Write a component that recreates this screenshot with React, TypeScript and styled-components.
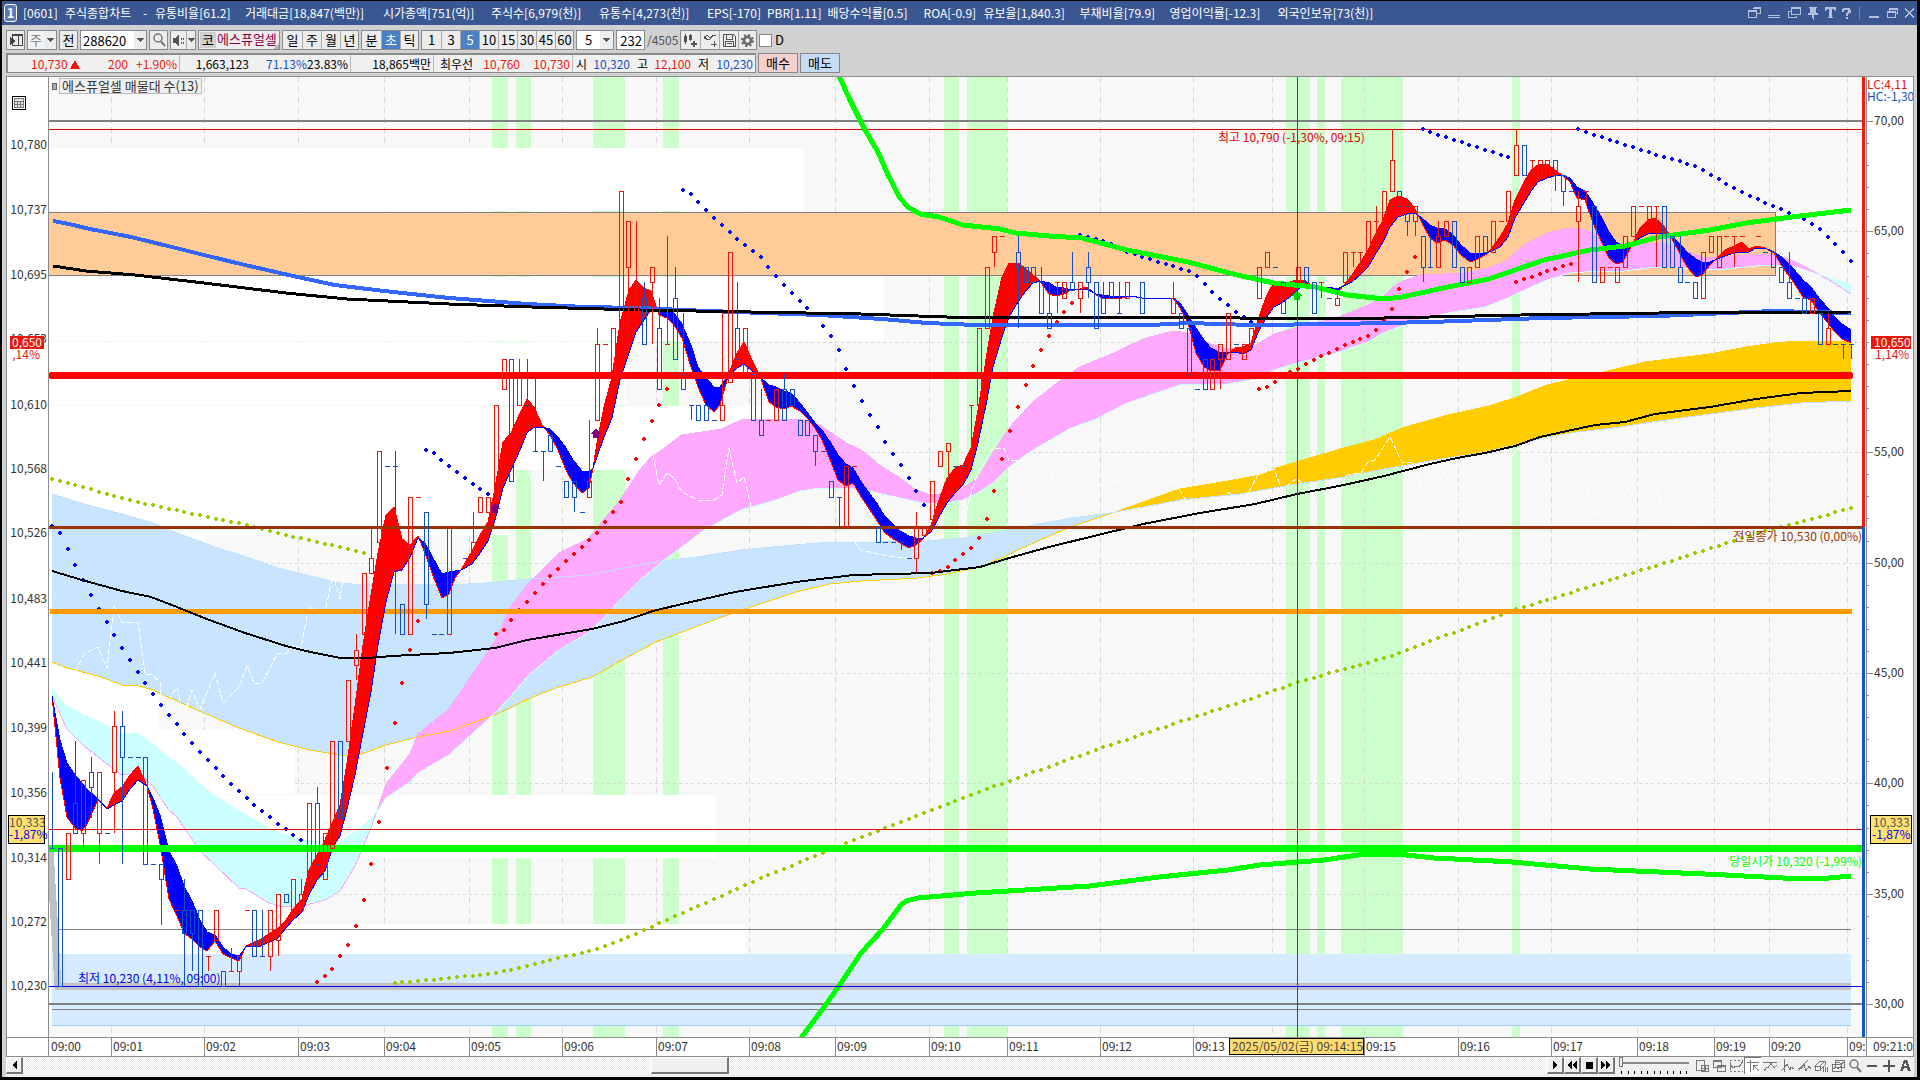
import React from "react";
import styled, { createGlobalStyle, css } from "styled-components";

/* ---------- global ---------- */

const Global = createGlobalStyle`
  * { box-sizing: border-box; }
  html, body { margin: 0; background: #000; }
  body, button, input, select {
    font-family: "Noto Sans CJK KR", "Liberation Sans", sans-serif;
    font-size: 13px;
    line-height: 16px;
  }
`;

/* ---------- chart data ---------- */

type Pt = [number, number];
const pts = (s: string): Pt[] =>
  s.trim().split(/\s+/).map((p) => p.split(",").map(Number) as Pt);

const STEP = 7.788;
const barX = (i: number) => Math.round(52 + i * STEP);
/* one level is a ten won tick below the day's marked high */
const levelY = (level: number) => Math.round(129.3 + level * 15.3);

/* bar index, body top, body bottom, high, low, direction */
const CANDLES = `
0 47 47 42 47 d;1 47 56 47 56 d;2 46 49 46 49 u;3 44 46 40 46 d;4 42.5 46 42.5 47 u;5 42 43 41 45 d;6 42 46 42 48 u;
7 46 46 46 46 d;8 39 42 38 46 u;9 39 41 38 48 d;10 41 41 41 41 d;11 41 41 41 41 d;12 41 48 41 48 d;13 48 48 48 48 d;
14 48 49 48 52 d;16 51 51 51 51 u;17 51 52.5 49 56 d;18 51 52.5 51 55 d;19 51 56 51 56 d;20 54 54 54 55 u;21 51 53 51 53 u;
22 55 56 55 56 d;23 55 55 53.5 55 u;24 54 55 54 56 u;25 51 51 51 51 u;26 51 54 51 54 d;27 54 54 51 54 d;28 51 54 51 55 u;
29 50 53 50 54 u;30 50 50.5 50 50.5 d;31 49 51 49 51 u;32 50 51 49 51 u;33 44 49 44 49 u;34 44 48 43 48 d;35 46 49 46 49 u;
36 40 47 40 47 u;37 40 45 40 45 d;38 36 40 36 40 u;39 34 35 33 36 u;40 29 33 29 33 u;41 28 29 26 29 u;42 21 27 21 27 u;
43 22 22 22 22 d;44 22 22 21 33 d;45 31 33 31 33 d;46 24 33 24 33 u;47 24 24 24 24 u;48 25 31 25 32 d;49 33 33 33 33 d;
50 33 33 33 33 d;51 26 33 26 33 u;53 28 28 28 28 d;54 27 27.5 25 28 u;55 24 25 24 25 u;56 24 25 24 25 u;57 18 24 18 24 u;
58 15 17 15 17 u;59 15 23 15 23 d;60 16 18 15 18 u;61 18 18 15 18 d;62 21 21 16 21 d;63 21 21 21 23 d;64 20 21 20 21 d;
65 22 22 22 22 d;66 23 24 23 24 d;67 23 24 23 25 d;68 25 25 25 25 d;69 23 24 19 24 u;70 14 19 13 19 u;71 14 14 14 14 u;
72 13 16 13 16 u;73 4 13 4 13 u;74 6 9 6 13 u;75 11 12 6 12 u;76 11 14 10 14 d;77 9 10 9 14 u;78 13 17 11 17 d;
79 14 14 7 14 u;80 11 15 9 15 d;81 16 17 12 17 d;82 18 18 18 19 d;83 18 19 18 19 d;84 18 19 18 19 d;85 19 19 19 19 d;
86 18 19 12 19 u;87 8 16.5 8 16.5 u;88 13 15 10 15 d;89 13 16 13 16 u;90 16 19 16 19 d;91 19 20 17 20 d;92 19 19 19 19 u;
93 17 19 17 19 u;94 17 19 16 19 d;95 17 18 17 18 d;96 19 20 19 20 d;97 19 20 19 20 d;98 20 21 20 22 d;99 21 21 21 21 d;
100 23 24 23 24 d;101 24 24 24 26 d;102 22 26 22 26 u;103 22 22 22 22 u;106 26 27 26 27 d;107 27 27 27 27 d;108 27 27 27 27 d;
109 27 27 27 27.5 d;110 28 28 28 28 d;111 26 28 25 29 u;112 26 26.5 26 26.5 u;113 23 25.5 23 25.5 u;114 21 22 21 22 u;
115 20.5 21 20.5 23 u;116 22 22 22 22 d;117 22 22 22 22 d;118 18 18 18 21 u;119 13 18 13 18 u;120 9 13 9 13 u;121 7 8 7 9 u;
122 7 7 7 7 u;124 8 9 7 13 d;125 9 10 9 10 d;126 9 10 9 10 d;127 10 12 9 12 d;128 12 13 10 13 d;129 10 10 10 12 u;
130 10 11 10 11 u;131 10 10.5 8 10.5 d;132 10 11 10 12 u;133 9 10 8 11 d;134 10 13 10 13 d;135 11 12 10 12 d;136 10 11 10 11 d;
137 12 12 10 12 d;138 10 11 10 11 u;140 10 12 10 12 d;144 11 12 10 12 u;145 12 13 12 13 d;146 13 16 13 16 d;147 17 17 17 17 d;
148 15 17 15 17 d;149 15 17 15 17 u;150 14 15 14 17 u;151 12 15 12 15 u;152 14 14 14 14 d;153 14 15 14 15 u;154 13 14 13 14 u;
155 9 11 9 11 u;156 8 9 8 9 u;157 9 9 9 9 d;158 10 12 10 12 d;160 9 10 9 10 u;161 9 10 9 10 d;162 10 12 10 12 d;163 10 10 10 11 u;
164 11 11 11 11 d;165 11 11.5 10.5 11.5 u;166 8 10 8 10 u;167 8 8 8 9 u;168 8 8 8 9 u;169 6 8 6 8 u;170 6 6 5 8 u;171 4 6 4 6 u;
172 2 4 0 4 u;173 4 5 4 5 d;174 5 6 5 7 d;175 5 6 5 7 u;176 7 9 7 10 d;177 9 9 7 9 d;178 7 9 6 9 u;179 6 7 6 7 u;180 6 9 6 9 d;
181 9 10 9 10 d;182 9 10 9 10 u;183 7 9 7 9 u;184 7 8 7 8 d;185 6 8 6 8 u;186 6 6 6 6 u;187 4 6 4 6 u;188 1 3 0 3 u;189 1 3 1 3 d;
190 2 2 2 3 u;191 2 3 2 3 u;192 2 3 2 3 u;193 2 3 2 4 d;194 3 4 3 5 d;195 4 4 4 4 d;196 5 6 4 10 u;197 4 4 4 5 u;198 5 10 5 10 d;
199 9 10 9 10 u;200 9 9 9 9 u;201 9 10 9 10 u;202 7 9 7 9 u;203 5 7 5 7 u;204 5 5 5 5 u;205 5 6 5 6 u;206 5 5 5 9 u;207 5 9 5 9 d;
208 7 9 7 9 d;209 9 10 7 10 d;210 10 10 10 10 d;211 10 11 10 11 d;212 8 11 8 11 u;213 7 8 7 8 u;214 7 9 7 9 u;215 7 7 7 7 u;
216 7 7 7 9 u;217 7 7 7 7 u;219 7 7 7 7 u;220 8 8 8 8 d;221 8 9 8 9 d;222 9 10 9 10 d;223 10 11 8 11 d;224 11 11 11 11 d;
225 11 12 11 12 d;226 11 12 11 12 u;227 12 14 12 14 d;228 13 14 12 14 u;229 14 14 14 14 d;230 14 14 14 15 d;231 14 14 14 15 d`
  .replace(/\n/g, "")
  .split(";")
  .map((row) => {
    const c = row.trim().split(" ");
    return { i: +c[0], top: +c[1], bottom: +c[2], high: +c[3], low: +c[4], up: c[5] === "u" };
  });

/* x, fast average, slow average */
const RIBBON = `
52,696,696 60,778,740 67,817,763 75,828,775 82,831,783 87,824,789 98,800,799 107,808,809 114,793,805 122,787,801 130,775,789
138,766,780 147,786,786 153,809,798 160,844,815 169,899,851 177,916,866 184,933,886 192,939,901 200,947,920 207,951,932
215,941,935 223,954,947 231,958,954 239,961,956 246,946,947 261,939,946 278,928,938 286,920,928 293,909,920 302,899,912
309,870,895 317,855,880 325,840,871 333,821,847 340,805,836 347,763,809 355,706,775 363,645,733 371,595,692 378,553,645
386,515,602 394,507,572 402,539,570 410,545,557 418,536,538 425,553,543 433,576,558 442,598,574 449,594,572 455,578,571
461,570,570 472,551,564 480,535,553 488,522,541 495,488,520 503,442,488 511,433,470 520,413,450 527,399,433 534,407,427
542,425,427 550,435,429 558,450,437 566,470,448 573,483,460 582,493,471 589,488,472 593,468,468 597,443,457 604,407,437
612,377,418 620,323,380 629,290,353 636,280,332 644,288,320 651,291,310 659,315,309 667,318,311 674,325,313 682,338,324
691,367,345 698,387,367 706,405,378 714,412,387 720,405,387 729,373,375 737,353,368 744,342,364 752,360,371 761,379,378
769,402,385 776,407,387 784,409,391 791,406,393 800,411,403 807,418,412 815,428,423 822,440,430 831,462,443 838,480,455
846,486,464 853,483,468 862,498,483 878,522,505 884,532,515 892,538,523 900,543,531 909,548,536 916,545,538 923,539,538
931,525,532 939,500,517 947,478,503 955,468,493 963,465,485 971,448,470 978,410,443 987,353,400 993,317,367 1002,277,337
1009,263,317 1018,263,302 1025,268,292 1033,275,283 1040,281,281 1049,294,283 1056,296,287 1064,294,288 1071,290,290
1080,289,289 1087,287,289 1096,295,294 1102,298,295 1118,299,297 1131,296,296 1142,298,298 1173,298,298 1180,308,303
1188,323,315 1196,353,328 1204,367,340 1211,371,348 1220,370,353 1227,355,352 1235,348,352 1243,347,354 1251,343,350
1258,320,333 1266,297,318 1274,282,307 1282,283,303 1290,282,297 1297,280,290 1305,280,285 1313,287,287 1321,287,287
1329,290,287 1336,294,289 1344,285,286 1352,275,282 1360,263,275 1368,250,267 1375,235,255 1383,220,242 1390,200,227
1398,196,217 1407,199,214 1414,207,213 1418,215,215 1422,223,218 1430,238,225 1437,243,228 1445,240,229 1453,245,235
1461,255,245 1470,262,253 1476,260,253 1487,254,253 1500,237,247 1508,223,237 1515,200,218 1524,182,203 1531,170,191
1538,165,182 1547,164,178 1554,169,176 1562,175,175 1570,182,178 1577,198,187 1585,200,191 1593,223,203 1602,243,218
1609,258,232 1616,264,242 1623,262,246 1633,243,243 1640,228,238 1648,220,234 1655,218,233 1663,225,234 1671,237,236
1679,252,243 1687,267,252 1696,277,259 1702,275,262 1710,265,262 1715,260,260 1725,250,256 1734,246,253 1742,242,252
1749,249,252 1756,246,248 1765,248,248 1774,253,252 1783,268,258 1792,280,267 1803,297,280 1811,300,287 1819,312,298
1827,322,307 1835,332,317 1842,339,324 1851,343,330`
  .trim()
  .split(/\s+/)
  .map((p) => p.split(",").map(Number));
const FAST = RIBBON.map((r) => [r[0], r[1]] as Pt);
const SLOW = RIBBON.map((r) => [r[0], r[2]] as Pt);

const PINK = pts(`52,696 67,729 84,746 106,763 122,775 139,773 153,786 168,809 177,817 200,851 215,865 239,888 246,889 269,903
280,906 301,907 310,904 325,900 340,891 355,866 371,828 378,808 386,784 410,754 418,734 449,709 472,675 495,641 511,606
529,583 559,553 588,539 600,524 612,510 620,500 640,470 651,457 662,450 682,435 722,429 743,419 767,420 800,419 820,425
846,443 861,450 882,467 900,478 916,490 931,495 947,493 963,488 978,478 993,453 1009,428 1033,402 1061,380 1080,367 1114,353
1143,339 1173,331 1188,333 1204,342 1227,349 1251,348 1274,334 1305,325 1336,318 1368,305 1383,297 1398,283 1420,275
1466,273 1492,267 1508,260 1524,245 1547,233 1570,228 1585,230 1609,238 1625,247 1648,243 1663,243 1679,248 1702,257
1725,257 1756,254 1774,254 1796,262 1815,272 1834,283 1851,294`);
const CYAN = pts(`52,689 67,706 84,715 106,725 122,733 139,734 153,744 168,757 177,763 200,784 215,796 239,811 246,815 269,828
280,833 301,840 325,842 340,842 355,832 371,819 378,810 386,798 410,782 418,773 449,755 472,734 495,713 511,696 529,675
559,650 588,633 604,618 620,600 640,580 662,562 706,529 741,510 776,500 800,491 820,488 846,488 869,491 900,498 923,503
947,503 963,500 978,493 993,483 1009,467 1033,450 1071,428 1094,420 1127,403 1180,385 1228,384 1255,379 1274,370 1297,363
1336,353 1368,342 1383,333 1407,324 1430,317 1453,312 1485,307 1508,298 1531,287 1547,280 1570,273 1585,272 1625,271
1655,267 1679,268 1702,269 1725,269 1756,266 1774,265 1796,267 1811,272 1824,276 1843,282 1851,285`);
const SKY = pts(`52,494 84,504 122,514 153,523 177,533 215,547 246,557 278,568 310,576 340,583 363,585 408,584 449,585 486,583
529,579 588,575 640,565 662,561 698,557 741,550 784,546 829,542 878,542 927,541 963,538 993,533 1033,525 1071,518 1110,513
1143,507 1180,500 1240,494 1251,492 1297,484 1344,477 1384,469 1430,461 1485,452 1515,445 1547,437 1577,432 1613,428
1659,421 1710,414 1756,408 1801,403 1851,401`);
const GOLD = pts(`52,662 67,668 98,676 122,685 139,686 153,690 177,701 204,713 239,728 278,742 310,750 340,755 359,755 386,745
418,737 449,731 469,724 495,715 535,696 559,687 592,677 624,659 656,642 682,632 722,617 763,603 796,592 829,584 861,581
918,578 947,574 980,567 988,564 1018,550 1049,536 1073,526 1118,511 1143,502 1180,489 1228,481 1260,475 1273,469 1306,459
1344,448 1374,440 1402,428 1448,415 1489,406 1517,397 1547,385 1577,378 1604,372 1645,362 1710,354 1746,347 1774,343
1797,341 1851,341`);

const LINES = [
  { color: "#000", width: 2, d: `52,571 82,580 122,591 151,597 177,607 204,618 245,633 286,646 306,651 340,658 367,658 392,656 449,653
495,648 527,640 592,629 624,621 653,611 682,604 735,592 796,582 853,575 931,573 980,567 1009,558 1049,547 1098,535 1143,524
1200,513 1255,504 1297,494 1344,485 1384,476 1430,464 1457,458 1485,453 1515,446 1540,437 1567,431 1595,425 1625,422
1655,414 1710,407 1756,399 1801,393 1851,391` },
  { color: "#3366ff", width: 4, d: `53,221 69,224 90,229 131,237 176,248 208,256 245,265 302,278 335,285 384,291 449,298 527,304 584,307
640,308 682,310 763,313 820,315 882,319 927,323 976,325 1151,325 1188,323 1251,325 1338,324 1430,322 1544,318 1659,316
1774,311 1851,313` },
  { color: "#000", width: 3, d: `53,266 86,271 135,275 204,283 286,293 347,299 449,304 531,307 640,310 861,314 947,317 1240,318 1384,318
1521,315 1659,313 1851,312` },
  { color: "#00ff00", width: 5, d: `839,76 850,100 865,130 878,152 888,175 900,198 908,207 920,214 939,217 963,225 1000,229 1016,233
1049,236 1082,238 1127,250 1188,262 1237,275 1274,283 1315,287 1347,295 1384,299 1402,297 1448,287 1489,279 1544,260
1590,250 1625,246 1659,237 1710,230 1746,223 1792,217 1851,210` },
  { color: "#00ff00", width: 5, d: `801,1038 827,1003 841,983 861,953 882,930 900,906 906,901 918,898 976,893 1090,886 1159,877 1228,870
1260,865 1324,860 1365,854 1397,854 1434,858 1512,862 1590,869 1705,874 1783,878 1829,878 1851,876` },
];

const WHITE_DASH = [
  `75,672 84,654 98,647 107,668 114,606 122,622 138,622 145,674 153,675 160,683 162,710 177,687 184,717 192,690 200,710 215,673
223,703 239,687 247,666 254,683 262,683 278,653 286,654 293,645 301,648 309,606 318,614 325,612 333,574 340,599 347,549`,
  `511,490 520,470 527,468 534,487 550,488 558,495 566,505 582,510`,
  `653,454 659,485 667,473 674,478 682,492 698,500 714,500 722,495 729,448 737,483 744,477 752,510 784,505 804,515 820,525
837,537 846,530 861,550 878,554 909,559 923,545 931,522 947,518 963,525 971,493 978,473 993,448 1004,448 1009,460 1024,460
1033,468 1041,470 1049,485 1056,470 1087,469 1096,487 1110,480 1142,483 1173,480 1188,503 1204,522 1216,517 1228,492
1243,503 1258,475 1274,469 1282,490 1297,478 1313,497 1321,487 1336,493 1347,475 1361,473 1368,462 1375,460 1390,437
1402,462 1414,463 1422,490 1430,490 1445,472 1457,500 1475,483 1485,488 1503,472 1517,448 1524,453 1547,453 1554,460
1570,472 1585,478 1593,515 1616,508 1633,482 1655,482 1663,513 1696,527 1710,500 1742,500 1749,517 1756,502 1774,520`,
];

const DOTS: { color: string; from: number; ys: number[] }[] = [
  { color: "#0000ff", from: 0, ys: [526, 533, 549, 565, 580, 595, 609, 622, 635, 648, 660, 672, 683, 694, 705, 715, 724, 734, 743, 752, 760, 768, 776, 784, 791, 798, 805, 811, 817, 824, 829, 835, 840] },
  { color: "#0000ff", from: 48, ys: [450, 453, 460, 466, 472, 478, 484, 489, 494] },
  { color: "#0000ff", from: 81, ys: [190, 194, 202, 210, 218, 225, 232, 239, 245, 251, 257, 267, 276, 285, 293, 301, 308, 315, 326, 336, 350, 369, 386, 401, 415, 427, 442, 454, 465, 478, 491, 505] },
  { color: "#0000ff", from: 132, ys: [235, 237, 239, 241, 244, 247, 252, 254, 257, 259, 262, 264, 266, 269, 271, 276, 284, 292, 299, 305, 312, 317, 322] },
  { color: "#0000ff", from: 176, ys: [129, 132, 135, 137, 140, 142, 145, 147, 150, 152, 155, 157] },
  { color: "#0000ff", from: 196, ys: [129, 132, 135, 137, 140, 142, 145, 147, 150, 152, 155, 157, 159, 161, 164, 166, 170, 175, 179, 184, 188, 192, 196, 199, 203, 206, 209, 213, 216, 219, 224, 229, 237, 244, 252, 261] },
  { color: "#ff0000", from: 34, ys: [982, 976, 969, 956, 945, 926, 900, 864, 822, 768, 723, 683, 650, 621] },
  { color: "#ff0000", from: 57, ys: [634, 630, 620, 610, 602, 593, 584, 576, 569, 561, 554, 547, 540, 533, 522, 512, 502, 479, 459, 439, 421, 405, 389] },
  { color: "#ff0000", from: 113, ys: [573, 571, 567, 560, 554, 548, 538, 519, 491, 459, 431, 407, 385, 366, 350, 336, 322, 312, 303] },
  { color: "#ff0000", from: 155, ys: [389, 387, 382, 375, 372, 369, 364, 360, 356, 353, 349, 345, 342, 339, 336, 330, 320, 309, 289, 272, 257] },
  { color: "#ff0000", from: 188, ys: [282, 279, 277, 274, 271, 269, 266, 264] },
];

/* bar index, y */
const OLIVE = [
  pts("0,479 11,502 20,517 25,525 29,533 33,540 38,549 40,553"),
  pts(`44,983 50,979 57,973 61,966 65,958 69,951 71,946 75,934 78,923 83,906 87,892 92,875 99,853 104,837 109,822 114,807 119,792
124,778 129,764 134,750 139,737 144,724 149,711 152,704 160,682 172,656 188,609 192,600 196,590 200,580 205,568 210,556
215,543 220,531 225,521 231,508`),
];

const SIGNAL_BARS = [[492, 508], [516, 531], [593, 625], [663, 679], [944, 959], [967, 1007], [1286, 1310], [1317, 1325], [1341, 1403], [1512, 1520]];
/* y, height, right edge of the volume-at-price rows */
const PROFILE = [[148, 63, 804], [277, 64, 884], [342, 63, 626], [406, 64, 790], [470, 65, 510], [535, 64, 205], [600, 64, 250], [665, 65, 159], [730, 64, 294], [795, 63, 716], [858, 66, 298], [924, 30, 745]];

const MINUTES: [number, string][] = [
  [49, "09:00"], [111, "09:01"], [204, "09:02"], [298, "09:03"], [384, "09:04"], [469, "09:05"], [562, "09:06"], [656, "09:07"],
  [749, "09:08"], [835, "09:09"], [929, "09:10"], [1007, "09:11"], [1100, "09:12"], [1193, "09:13"], [1272, ""], [1364, "09:15"],
  [1458, "09:16"], [1551, "09:17"], [1637, "09:18"], [1714, "09:19"], [1769, "09:20"], [1847, "09:21"],
];
const PRICES = [780, 737, 695, 653, 610, 568, 526, 483, 441, 399, 356, 314, 272, 230];
const OSC = [70, 65, 60, 55, 50, 45, 40, 35, 30];
const oscY = (v: number) => Math.round(121 + (70 - v) * 22.08);

const at = (line: Pt[], x: number) => {
  if (x <= line[0][0]) return line[0][1];
  for (let k = 1; k < line.length; k++) {
    const [x0, y0] = line[k - 1];
    const [x1, y1] = line[k];
    if (x <= x1) return y0 + ((y1 - y0) * (x - x0)) / (x1 - x0);
  }
  return line[line.length - 1][1];
};

const str = (line: Pt[]) => line.map((p) => p.join(",")).join(" ");

/* Fills between two lines, in one colour where a is the upper one and in the other where b is. */
function Band({ a, b, above, below }: { a: Pt[]; b: Pt[]; above: string; below: string }) {
  const runs: { up: boolean; xs: number[] }[] = [];
  for (let x = 52; x < 1851; x += 1) {
    const up = at(a, x + 0.5) < at(b, x + 0.5);
    const last = runs[runs.length - 1];
    if (last && last.up === up) last.xs.push(x + 1);
    else runs.push({ up, xs: [x, x + 1] });
  }
  return (
    <>
      {runs.map((r, k) => (
        <polygon
          key={k}
          fill={r.up ? above : below}
          points={str([
            ...r.xs.map((x) => [x, +at(a, x).toFixed(1)] as Pt),
            ...[...r.xs].reverse().map((x) => [x, +at(b, x).toFixed(1)] as Pt),
          ])}
        />
      ))}
    </>
  );
}

const Dot = ({ x, y, color }: { x: number; y: number; color: string }) => (
  <path d={`M${x - 2} ${y - 1}h1v-1h2v1h1v2h-1v1h-2v-1h-1z`} fill={color} />
);

/* ---------- shell ---------- */

const Window = styled.div`
  min-height: 100vh;
  display: flex;
  flex-direction: column;
  background: #d1d1d1;
  border: solid #000;
  border-width: 1px 3px 3px 2px;
`;

const TitleBar = styled.header`
  height: 24px;
  flex: none;
  display: flex;
  align-items: center;
  padding: 0 2px;
  background: #3b5791;
  color: #fff;
`;
const AppMark = styled.span`
  width: 13px;
  height: 18px;
  margin-right: 6px;
  border: 1px solid #fff;
  border-radius: 3px;
  background: #5b78b0;
  font-weight: bold;
  text-align: center;
`;
const Title = styled.h1`
  margin: 0;
  flex: 1;
  display: flex;
  gap: 6px;
  font-size: 12px;
  font-weight: normal;
  white-space: nowrap;
`;
const WindowTools = styled.div`
  display: flex;
  align-items: center;
  gap: 6px;
  color: #b4c0da;
`;
const BareButton = styled.button`
  display: flex;
  align-items: center;
  justify-content: center;
  padding: 0;
  border: 0;
  background: none;
  color: inherit;
`;
const Divider = styled.i`
  width: 1px;
  height: 14px;
  margin: 0 2px;
  background: #7f7f80;
`;

const Bar = styled.div`
  display: flex;
  flex: none;
  align-items: center;
  gap: 2px;
  padding-left: 4px;
  white-space: nowrap;
`;
const ToolBar = styled(Bar)`
  margin-top: 5px;
  height: 20px;
`;
const QuoteBar = styled(Bar)`
  margin: 3px 0;
  height: 20px;
`;
const Group = styled.div`
  display: flex;
  height: 20px;
  border: 1px solid #8a8a8a;
  background: #ececec;
`;
const Tool = styled.button<{ $on?: boolean; $w?: number }>`
  display: flex;
  align-items: center;
  justify-content: center;
  width: ${(p) => p.$w ?? 19}px;
  padding: 0;
  border: 0;
  background: ${(p) => (p.$on ? "#4a80c4" : "#ececec")};
  color: ${(p) => (p.$on ? "#fff" : "#000")};
  & + & { border-left: 1px solid #a8a8a8; }
  &:last-child:not(:only-child) { width: ${(p) => (p.$w ?? 19) - 1}px; }
`;
const field = css`
  height: 18px;
  border: 0;
  background: #fff;
  color: #000;
  outline: 0;
  border-radius: 0;
`;
const Field = styled.input<{ $w: number; $end?: boolean }>`
  ${field}
  padding: 0 2px;
  width: ${(p) => p.$w}px;
  text-align: ${(p) => (p.$end ? "right" : "left")};
`;
const Picker = styled.select<{ $w: number; $dim?: boolean }>`
  ${field}
  appearance: none;
  padding: 0;
  width: ${(p) => p.$w}px;
  text-align: center;
  background: ${(p) => (p.$dim ? "#f4f4f4" : "#fff")};
  color: ${(p) => (p.$dim ? "#777" : "#000")};
`;
const Market = styled.span`
  width: 16px;
  margin: 1px;
  background: #cfcfcf;
  text-align: center;
`;
const StockName = styled.span`
  width: 62px;
  color: #8b0045;
  background: linear-gradient(135deg, transparent 93%, #b0b0b0 93%);
`;
const Count = styled.span`
  width: 31px;
  color: #555;
  font-size: 12px;
`;
const Check = styled.label`
  display: flex;
  align-items: center;
  gap: 3px;
  input {
    appearance: none;
    width: 13px;
    height: 13px;
    margin: 0;
    border: 1px solid #888;
    background: #fff;
  }
`;

const Quote = styled.div`
  display: flex;
  height: 20px;
  border: 1px solid #8a8a8a;
  border-width: 2px 1px 1px 2px;
  background: #f0f0f0;
  font-size: 12px;
`;
const Cell = styled.div<{ $w: number }>`
  display: flex;
  justify-content: flex-end;
  align-items: center;
  width: ${(p) => p.$w}px;
  padding-right: 2px;
  & + & { border-left: 1px solid #bbb; }
`;
const Val = styled.span<{ $c?: string; $w: number }>`
  width: ${(p) => p.$w}px;
  text-align: right;
  color: ${(p) => p.$c ?? "#000"};
`;
const Order = styled.button<{ $bg: string }>`
  width: 40px;
  height: 20px;
  padding: 0;
  border: 1px solid #888;
  background: ${(p) => p.$bg};
`;

const ChartFrame = styled.main`
  flex: 1;
  display: grid;
  grid-template-columns: 41px minmax(0, 1fr) 47px;
  grid-template-rows: minmax(0, 1fr) 19px;
  margin: 0 3px 0 4px;
  border: 1px solid #8c8c8c;
  background: #fff;
`;
const Surface = styled.svg`
  display: block;
  width: 100%;
  height: 100%;
  min-height: 0;
  overflow: hidden;
  font-size: 12px;
`;
const Pane = styled.div<{ $line?: boolean; $top?: boolean }>`
  position: relative;
  min-width: 0;
  overflow: hidden;
  border-left: ${(p) => (p.$line ? "1px solid #8c8c8c" : "0")};
  border-top: ${(p) => (p.$top ? "1px solid #8c8c8c" : "0")};
  & > svg { position: absolute; inset: 0; }
`;
const Legend = styled.div`
  position: absolute;
  left: 3px;
  top: 1px;
  display: flex;
  align-items: center;
  gap: 2px;
  span {
    height: 16px;
    padding: 0 2px;
    border: 1px solid #bdbdbd;
    background: #f0f0f0;
    color: #333;
    line-height: 14px;
  }
  i {
    width: 5px;
    height: 7px;
    border: 1px solid #666;
    background: #aaa;
  }
`;

const Footer = styled.footer`
  flex: none;
  display: flex;
  height: 20px;
  margin: 0 3px 0 4px;
  padding-bottom: 3px;
  background: #f0f0f0;
`;
const Track = styled.div`
  flex: 1;
  display: flex;
  background: repeating-conic-gradient(#ebebeb 0 25%, #fff 0 50%) 0 0 / 2px 2px;
`;
const Raised = styled.button<{ $w: number }>`
  display: flex;
  align-items: center;
  justify-content: center;
  width: ${(p) => p.$w}px;
  height: 17px;
  padding: 0;
  border: solid;
  border-width: 1px 2px 2px 1px;
  border-color: #fff #777 #777 #fff;
  background: #f0f0f0;
`;
const Thumb = styled(Raised)`
  margin-left: 41.2%;
`;
const Speed = styled.label`
  width: 78px;
  padding: 0 4px;
  input {
    appearance: none;
    display: block;
    width: 70px;
    height: 10px;
    margin: 0;
    background: linear-gradient(#888, #888) 0 5px / 100% 2px no-repeat;
  }
  input::-webkit-slider-thumb {
    appearance: none;
    width: 4px;
    height: 10px;
    border: 1px solid #777;
    background: #f0f0f0;
  }
  svg { display: block; }
`;
const DrawTools = styled.div`
  display: flex;
`;
const DrawTool = styled.button<{ $on?: boolean }>`
  display: flex;
  align-items: center;
  justify-content: center;
  width: 17px;
  height: 17px;
  padding: 0;
  border: solid #777;
  border-width: ${(p) => (p.$on ? "1px 0 0 1px" : "0")};
  background: ${(p) => (p.$on ? "#fff" : "none")};
`;

/* ---------- icons ---------- */

const Icon = ({ d, w = 14, h = 14, fill = "none", stroke = "#777", sw = 1 }: { d: string; w?: number; h?: number; fill?: string; stroke?: string; sw?: number }) => (
  <svg width={w} height={h} viewBox={`0 0 ${w} ${h}`} shapeRendering="crispEdges" aria-hidden>
    <path d={d} fill={fill} stroke={stroke} strokeWidth={sw} />
  </svg>
);
const Caret = () => <Icon w={7} h={5} d="M0 0h7L3.500 4z" fill="#555" stroke="none" />;
const Lens = () => (
  <svg width="14" height="14" viewBox="0 0 14 14" fill="none" stroke="#777" aria-hidden>
    <circle cx="6" cy="5" r="4" strokeWidth="1.500" />
    <path d="M9 8.500l4 4.500" strokeWidth="2" />
  </svg>
);

const WINDOW_ICONS: [string, string][] = [
  ["분리", "M1.500 4.500h8v7h-8zM1 5.500h8M6.500 1.500h7v6h-4M6 2.500h8"],
  ["접기", "M1 9.500h12M1 11.500h12"],
  ["복사", "M4.500 1.500h9v7h-9zM4 2.500h10M4 5.500h-2.500v6h8v-2"],
];

const DRAW_ICONS: [string, string][] = [
  ["새 창", "M1.500 1.500h8v10h-8zM6.500 6.500h7v6h-7zM10 6v7M6 9.500h8"],
  ["복제", "M1.500 1.500h8v7h-8zM1 2.500h9M5.500 6.500h8v6h-8zM5 7.500h9"],
  ["영역", "M1 1.500h2m2 0h2m2 0h2m2 0h1M1 12.500h2m2 0h2m2 0h2m2 0h1M1 5l3 4 3-2 3 1 4-6M1.500 3v8"],
  ["십자선", "M1 3.500h12M4.500 1v12M7 6l6 6M7.500 6v5M7 6.500h5"],
  ["수평선", "M0 3.500h14M1 12l3-4 1 1 3-5 3 5 3-3"],
  ["수직선", "M4.500 0v13M1 12l4-4 2-3 3 6 1-3 3 2"],
  ["추세선", "M1 12L11 1M1 9l3 1 3-4 2 6 3-5 2 3"],
  ["모두 지우기", "M1 7l5-5h5l-5 5zM1 7h5v4h-5zM6 11l5-5v-4M9.500 8v5M11.500 8v5M13.500 8v5"],
  ["차트 비교", "M4.500 1.500h9v7h-9zM1.500 5.500h9v7h-9zM2 10l3-2 2 2 3-3M5 4l3-1 2 2 3-2"],
];

/* ---------- parts ---------- */

const HEADLINE = ["[0601]", "주식종합차트", "-", "유통비율[61.2]", "거래대금[18,847(백만)]", "시가총액[751(억)]", "주식수[6,979(천)]", "유통수[4,273(천)]", "EPS[-170]", "PBR[1.11]", "배당수익률[0.5]", "ROA[-0.9]", "유보율[1,840.3]", "부채비율[79.9]", "영업이익률[-12.3]", "외국인보유[73(천)]"];
/* Hangul takes two columns of the title's 6px grid, anything else one */
const columns = (s: string) => [...s].reduce((n, c) => n + (c > "\u1100" ? 2 : 1), 0);

const RED = "#e8180c";
const BLUE = "#1450c0";

function Buttons({ items, on }: { items: string[]; on?: string }) {
  return (
    <Group>
      {items.map((t) => (
        <Tool key={t} $on={t === on}>{t}</Tool>
      ))}
    </Group>
  );
}

function PricePlot() {
  return (
    <Surface viewBox="49 77 1817 960" preserveAspectRatio="none" shapeRendering="crispEdges">
      <rect x="49" y="77" width="1817" height="960" fill="#f8f8f8" />
      {SIGNAL_BARS.map(([a, b]) => (
        <rect key={a} x={a} y="77" width={b - a} height="960" fill="#ccffcc" />
      ))}
      <g stroke="#d8d8d8" strokeDasharray="6 4">
        {MINUTES.slice(1).map(([x]) => <path key={x} d={`M${x + 0.5} 77V1037`} />)}
      </g>
      <g stroke="#d8d8d8" strokeDasharray="3 3">
        {OSC.map((v) => <path key={v} d={`M49 ${oscY(v) + 0.5}H1862`} />)}
      </g>
      {PROFILE.map(([y, h, r]) => <rect key={y} x="49" y={y} width={r - 49} height={h} fill="#fff" />)}
      <rect x="48.500" y="212.500" width="1727" height="63" fill="#ffcc99" stroke="#808080" />
      <rect x="52" y="954" width="1799" height="72" fill="#d6ebff" />
      <path d="M52 1025.500H1851" stroke="#99ccff" />
      <path d="M52 929.500H1851M52 1009.500H1851" stroke="#808080" />
      <path d="M49 121H1863M49 1004H1863" stroke="#808080" strokeWidth="2" />
      <path d="M49 129.500H1863" stroke="#dc0000" />
      <path d="M50 850L58 986.500H1851" stroke="#c0c0c0" strokeWidth="7" fill="none" />

      <Band a={SKY} b={GOLD} above="#c9e4ff" below="#ffcc00" />
      <Band a={PINK} b={CYAN} above="#ffaaff" below="#ccffff" />
      <polyline points={str(GOLD)} fill="none" stroke="#ffcc00" />
      <polyline points={str(SKY)} fill="none" stroke="#c0e0ff" />
      <polyline points={str(PINK)} fill="none" stroke="#f4a8f8" />
      <polyline points={str(CYAN)} fill="none" stroke="#ccffff" />
      {WHITE_DASH.map((d) => (
        <polyline key={d} points={d} fill="none" stroke="#fff" strokeDasharray="6 2" />
      ))}
      {DOTS.map((s) => s.ys.map((y, k) => <Dot key={`${s.from}-${k}`} x={barX(s.from + k)} y={y} color={s.color} />))}
      {OLIVE.map((line) => {
        const from = line[0][0];
        const n = line[line.length - 1][0] - from + 1;
        return Array.from({ length: n }, (_, k) => (
          <Dot key={from + k} x={barX(from + k)} y={Math.round(at(line, from + k))} color="#99cc00" />
        ));
      })}
      <path d="M50 611.500H1852" stroke="#ff9900" strokeWidth="5" />
      <Band a={FAST} b={SLOW} above="#ff0000" below="#0000ff" />
      <polyline points={str(FAST)} fill="none" stroke="#ff0000" />
      <polyline points={str(SLOW)} fill="none" stroke="#0000ff" />
      {LINES.map((l) => (
        <polyline key={l.d} points={l.d} fill="none" stroke={l.color} strokeWidth={l.width} strokeLinejoin="round" />
      ))}
      <path d="M52 375.500H1850" stroke="#ff0000" strokeWidth="7" strokeLinecap="round" />
      <path d="M49 527.500H1862" stroke="#993300" strokeWidth="3" />
      <path d="M49 848.500H1862" stroke="#00ff00" strokeWidth="7" />
      <path d="M49 986.500H1862" stroke="#0000ff" />

      {CANDLES.map((c) => {
        const x = barX(c.i);
        const [t, b, h, l] = [c.top, c.bottom, c.high, c.low].map(levelY);
        const body = t === b ? `M${x - 2} ${t + 0.5}h5` : `M${x - 1.5} ${t + 0.5}h4V${b + 0.5}h-4z`;
        return (
          <path
            key={c.i}
            d={`${body}M${x + 0.5} ${h}V${t}M${x + 0.5} ${b}V${l}`}
            fill="none"
            stroke={c.up ? RED : BLUE}
          />
        );
      })}
      <path d="M495 503l5 6h-2v4h-6v-4h-2zM596 428l5 6h-2v4h-6v-4h-2z" fill="#800080" />
      <path d="M1297 290l5 6h-2v4h-6v-4h-2z" fill="#00e000" />
      <path d="M49 829.500H1862" stroke="#dc1010" />
      <path d="M1297.500 77V1037" stroke="#b8143c" />
      <path d="M1863.500 77V527" stroke="#ee1c0c" strokeWidth="3" />
      <path d="M1863.500 527V1037" stroke="#1458c8" strokeWidth="3" />

      <text x="1218" y="142" fill="#dc0000">최고 10,790 (-1,30%, 09:15)</text>
      <text x="78" y="983" fill="#0000e0">최저 10,230 (4,11%, 09:00)</text>
      <text x="1862" y="541" fill="#993300" textAnchor="end">전일종가 10,530 (0,00%)</text>
      <text x="1862" y="866" fill="#00ff00" textAnchor="end">당일시가 10,320 (-1,99%)</text>
    </Surface>
  );
}

function PriceAxis() {
  return (
    <Surface viewBox="7 77 41 960" preserveAspectRatio="none" shapeRendering="crispEdges">
      <path d="M12.500 96.500h13v13h-13z" fill="#fff" stroke="#000" />
      <path d="M14.500 98.500h9v9h-9zM14 101.500h10M14 104.500h10M17.500 101v7M20.500 101v7" fill="#e4e4e4" stroke="#777" />
      {PRICES.map((p) => (
        <text key={p} x="47" y={levelY((790 - p) / 10) + 4} textAnchor="end" fill="#333">10,{p}</text>
      ))}
      <rect x="10" y="336" width="34" height="13" fill={RED} />
      <text x="42" y="347" textAnchor="end" fill="#fff">0,650</text>
      <text x="40" y="359" textAnchor="end" fill={RED}>,14%</text>
      <rect x="8.500" y="815.500" width="36" height="28" fill="#ffe070" stroke="#000" />
      <text x="9" y="827" fill="#555">10,333</text>
      <text x="9" y="839" fill="#0000e0">-1,87%</text>
    </Surface>
  );
}

function OscAxis() {
  const minor = Array.from({ length: 41 }, (_, k) => Math.round(121 + k * 22.08));
  return (
    <Surface viewBox="1867 77 46 960" preserveAspectRatio="none" shapeRendering="crispEdges">
      {minor.map((y) => <path key={y} d={`M1867 ${y + 0.5}h2`} stroke="#8c8c8c" />)}
      {OSC.map((v) =>
        v === 60 ? null : (
          <g key={v}>
            <path d={`M1867 ${oscY(v) + 0.5}h6`} stroke="#8c8c8c" />
            <text x="1874" y={oscY(v) + 4} fill="#333">{v},00</text>
          </g>
        ),
      )}
      <text x="1867" y="89" fill={RED}>LC:4,11</text>
      <text x="1867" y="101" fill={BLUE}>HC:-1,30</text>
      <rect x="1871" y="336" width="40" height="13" fill={RED} />
      <text x="1874" y="347" fill="#fff">10,650</text>
      <text x="1875" y="359" fill={RED}>1,14%</text>
      <rect x="1870.500" y="815.500" width="41" height="28" fill="#ffe070" stroke="#000" />
      <text x="1873" y="827" fill="#555">10,333</text>
      <text x="1872" y="839" fill="#0000e0">-1,87%</text>
    </Surface>
  );
}

function TimeAxis() {
  return (
    <Surface viewBox="49 1038 1817 18" preserveAspectRatio="none" shapeRendering="crispEdges">
      {MINUTES.map(([x, t], k) => (
        <g key={x}>
          {k > 0 && <path d={`M${x + 0.5} 1038v18`} stroke="#8c8c8c" />}
          <text x={x + 2} y="1051" fill="#333">{t}</text>
        </g>
      ))}
      <rect x="1229.500" y="1038.500" width="134" height="16" fill="#ffdc70" stroke="#000" />
      <text x="1232" y="1051" fill="#444">2025/05/02(금) 09:14:15</text>
    </Surface>
  );
}

export default function App() {
  return (
    <>
      <Global />
      <Window>
        <TitleBar>
          <AppMark>1</AppMark>
          <Title>
            {HEADLINE.map((t) => (
              <span key={t} style={{ minWidth: columns(t) * 6 }}>{t}</span>
            ))}
          </Title>
          <WindowTools>
            {WINDOW_ICONS.map(([name, d]) => (
              <BareButton key={name} aria-label={name}><Icon d={d} stroke="#b4c0da" /></BareButton>
            ))}
            <BareButton aria-label="고정"><Icon w={12} d="M2 1h8v1h-1v5h2v2H1v-2h2v-5h-1zM5 9h2v5h-1z" fill="#b4c0da" stroke="none" /></BareButton>
            <BareButton aria-label="글꼴"><Icon w={11} d="M0 1h11v4h-1l-1-2h-2v8h1v1h-5v-1h1v-8h-2l-1 2h-1z" fill="#b4c0da" stroke="none" /></BareButton>
            <BareButton aria-label="도움말"><Icon w={9} h={13} d="M1 5v-1.500l1.500-2h4l1 2v1.500l-3 2v2M4.500 10v2" stroke="#b4c0da" sw={2} /></BareButton>
            <Divider />
            <BareButton aria-label="최소화"><Icon w={12} d="M1 10.500h10" stroke="#b4c0da" sw={2} /></BareButton>
            <BareButton aria-label="이전 크기"><Icon w={12} d="M3.500 5V2.500h8v5h-2M1.500 5.500h8v6h-8zM1 6.500h8M3 3.500h8" stroke="#b4c0da" /></BareButton>
            <BareButton aria-label="닫기"><Icon w={11} d="M1 2.500l9 9M10 2.500l-9 9" stroke="#b4c0da" sw={1.5} /></BareButton>
          </WindowTools>
        </TitleBar>

        <ToolBar>
          <Group><Tool $w={17} aria-label="목록"><Icon d="M3.500 1.500h10v11h-10zM3 2.500h11M9.500 2v10M1.500 4v8M2 5l4 3-4 3z" stroke="#444" /></Tool></Group>
          <Group>
            <Picker $w={16} $dim aria-label="주기" defaultValue="주"><option>주</option></Picker>
            <Tool $w={13} aria-label="주기 열기"><Caret /></Tool>
          </Group>
          <Group><Tool $w={17}>전</Tool></Group>
          <Group>
            <Field $w={53} aria-label="종목코드" defaultValue="288620" />
            <Tool $w={13} aria-label="종목 열기"><Caret /></Tool>
          </Group>
          <Group><Tool $w={17} aria-label="종목 검색"><Lens /></Tool></Group>
          <Group>
            <Tool $w={15} aria-label="소리"><Icon w={13} h={13} d="M1 4h2l3-3h1v11h-1l-3-3h-2zM9 4h1v2h-1zM11 4h1v2h-1zM9 8h1v2h-1zM11 8h1v2h-1z" fill="#555" stroke="none" /></Tool>
            <Tool $w={10} aria-label="소리 설정"><Caret /></Tool>
          </Group>
          <Group><Market>코</Market><StockName>에스퓨얼셀</StockName></Group>
          <Buttons items={["일", "주", "월", "년"]} />
          <Buttons items={["분", "초", "틱"]} on="초" />
          <Buttons items={["1", "3", "5", "10", "15", "30", "45", "60"]} on="5" />
          <Group>
            <Picker $w={23} aria-label="간격" defaultValue="5"><option>5</option></Picker>
            <Tool $w={14} aria-label="간격 열기"><Caret /></Tool>
          </Group>
          <Group><Field $w={27} $end aria-label="표시 봉 수" defaultValue="232" /></Group>
          <Count>/4505</Count>
          <Group>
            <Tool aria-label="봉 추가"><Icon w={15} h={15} d="M1 3h3v6h-3zM2 1h1v10h-1zM6 2h3v5h-3zM7 1h1v7h-1zM10 8h2v2h2v2h-2v2h-2v-2h-2v-2h2z" fill="#555" stroke="none" /></Tool>
            <Tool aria-label="지표 추가"><Icon w={15} h={15} d="M1 6l3-4 3 3 3-3 3 1M1 3l3 4 3-1 3-3M11 8v6M8 11h6" stroke="#555" /></Tool>
            <Tool aria-label="저장"><Icon w={15} h={15} d="M1.500 1.500h10l2 2v10h-12zM4.500 2v4h6v-4M3.500 13v-5h8v5M5 10.500h5" stroke="#555" /></Tool>
            <Tool aria-label="설정">
              <svg width="15" height="15" viewBox="0 0 15 15" fill="none" stroke="#666" aria-hidden>
                <circle cx="7.500" cy="7.500" r="3.500" strokeWidth="2.500" />
                <circle cx="7.500" cy="7.500" r="5.500" strokeWidth="2" strokeDasharray="2.160 2.160" />
              </svg>
            </Tool>
          </Group>
          <Check><input type="checkbox" />D</Check>
        </ToolBar>

        <QuoteBar>
          <Quote>
            <Cell $w={171}>
              <Val $w={35} $c={RED}>10,730</Val>
              <Val $w={14} $c={RED}><Icon w={10} h={9} d="M0 9h10L5 0z" fill={RED} stroke="none" /></Val>
              <Val $w={48} $c={RED}>200</Val>
              <Val $w={49} $c={RED}>+1.90%</Val>
            </Cell>
            <Cell $w={171}>
              <Val $w={54}>1,663,123</Val>
              <Val $w={58} $c={BLUE}>71.13%</Val>
              <Val $w={41}>23.83%</Val>
            </Cell>
            <Cell $w={83}><Val $w={70}>18,865백만</Val></Cell>
            <Cell $w={139}>
              <Val $w={36}>최우선</Val>
              <Val $w={47} $c={RED}>10,760</Val>
              <Val $w={50} $c={RED}>10,730</Val>
            </Cell>
            <Cell $w={183}>
              <Val $w={12}>시</Val>
              <Val $w={43} $c={BLUE}>10,320</Val>
              <Val $w={18}>고</Val>
              <Val $w={43} $c={RED}>12,100</Val>
              <Val $w={18}>저</Val>
              <Val $w={44} $c={BLUE}>10,230</Val>
            </Cell>
          </Quote>
          <Order $bg="#f6d0cc">매수</Order>
          <Order $bg="#c6dcf4">매도</Order>
        </QuoteBar>

        <ChartFrame>
          <Pane><PriceAxis /></Pane>
          <Pane $line>
            <PricePlot />
            <Legend><i /><span>에스퓨얼셀 매물대 수(13)</span></Legend>
          </Pane>
          <Pane $line><OscAxis /></Pane>
          <Pane $top />
          <Pane $line $top><TimeAxis /></Pane>
          <Pane $line $top>
            <Surface viewBox="1867 1038 46 18" preserveAspectRatio="none"><text x="1873" y="1051" fill="#333">09:21:0</text></Surface>
          </Pane>
        </ChartFrame>

        <Footer>
          <Raised $w={17} aria-label="왼쪽으로"><Icon w={5} h={8} d="M5 0v8L0 4z" fill="#000" stroke="none" /></Raised>
          <Track><Thumb $w={78} aria-label="스크롤" /></Track>
          <Raised $w={17} aria-label="재생"><Icon w={5} h={8} d="M0 0v8L5 4z" fill="#000" stroke="none" /></Raised>
          <Raised $w={17} aria-label="뒤로"><Icon w={10} h={8} d="M5 0v8L0 4zM10 0v8L5 4z" fill="#000" stroke="none" /></Raised>
          <Raised $w={17} aria-label="정지"><Icon w={7} h={7} d="M0 0h7v7h-7z" fill="#000" stroke="none" /></Raised>
          <Raised $w={17} aria-label="앞으로"><Icon w={10} h={8} d="M0 0v8L5 4zM5 0v8L10 4z" fill="#000" stroke="none" /></Raised>
          <Speed>
            <input type="range" min="0" max="10" defaultValue="0" aria-label="속도" />
            <Icon w={70} h={7} d={Array.from({ length: 11 }, (_, k) => `M${2.5 + k * 6.5} 4v3`).join("")} stroke="#000" />
          </Speed>
          <DrawTools>
            {DRAW_ICONS.map(([name, d]) => (
              <DrawTool key={name} aria-label={name} $on={name === "십자선"}><Icon d={d} /></DrawTool>
            ))}
            <DrawTool aria-label="확대경"><Lens /></DrawTool>
            <DrawTool aria-label="축소"><Icon d="M2 7h10" stroke="#555" sw={2} /></DrawTool>
            <DrawTool aria-label="확대"><Icon d="M1 7h12M7 1v12" stroke="#555" sw={2} /></DrawTool>
            <DrawTool aria-label="자동"><Icon w={11} h={11} d="M4 0h3l4 11h-3l-1-3h-3l-1 3h-3zM5 3l-1 3h3l-1-3z" fill="#555" stroke="none" /></DrawTool>
          </DrawTools>
        </Footer>
      </Window>
    </>
  );
}
